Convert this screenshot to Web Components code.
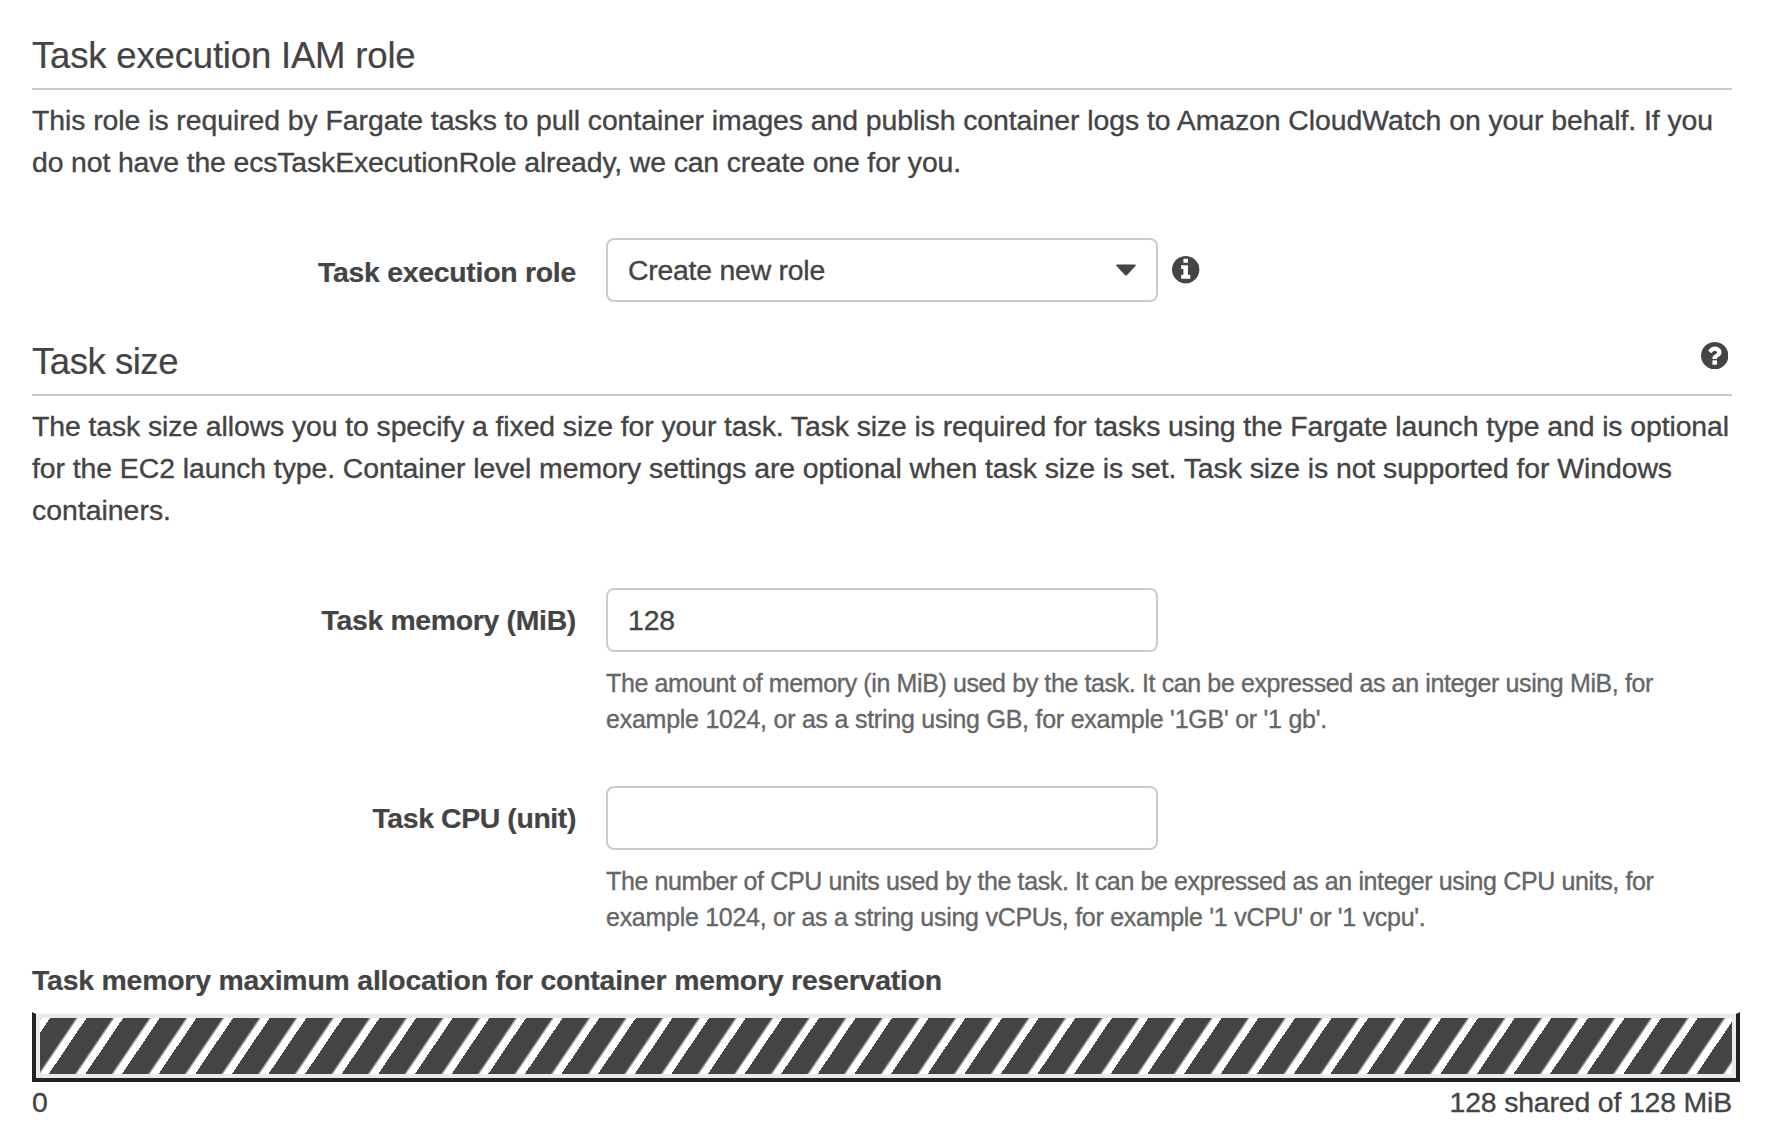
<!DOCTYPE html>
<html lang="en">
<head>
<meta charset="utf-8">
<title>Task definition</title>
<style>
html,body{margin:0;background:#fff}
body{font-family:"Liberation Sans",Arial,sans-serif;font-size:28.4px;line-height:42px;color:#444;-webkit-text-stroke:.35px currentColor}
</style>
</head>
<body>
<task-page></task-page>
<script>
const define = (name, html, init) => customElements.define(name, class extends HTMLElement {
  connectedCallback() {
    if (this.shadowRoot) return;
    const t = document.createElement('template');
    t.innerHTML = html;
    this.attachShadow({mode: 'open'}).appendChild(t.content.cloneNode(true));
    if (init) init.call(this, this.shadowRoot);
  }
});

// A single line of text, tracked so that it spans the given width.
define('text-line', `<style>:host{display:block;white-space:nowrap}span{display:inline-block}</style><span><slot></slot></span>`, function (root) {
  const s = root.querySelector('span');
  const n = this.textContent.length;
  const gap = (this.getAttribute('span') - s.getBoundingClientRect().width) / n;
  s.style.letterSpacing = gap.toFixed(4) + 'px';
});

define('ui-icon', `<style>:host{display:block;width:27.4px;height:27.4px;flex:none}svg{display:block;width:100%;height:100%;fill:#444}</style><svg viewBox="0 0 1536 1536"><path/></svg>`, function (root) {
  const disc = 'M1536 768q0 209-103 385.500t-279.500 279.500-385.500 103-385.500-103-279.500-279.500-103-385.500 103-385.500 279.500-279.500 385.500-103 385.500 103 279.500 279.500 103 385.500z';
  const glyph = {
    info: 'M1024 1248v-160q0-14-9-23t-23-9h-96v-512q0-14-9-23t-23-9h-320q-14 0-23 9t-9 23v160q0 14 9 23t23 9h96v320h-96q-14 0-23 9t-9 23v160q0 14 9 23t23 9h448q14 0 23-9t9-23zM896 352v-160q0-14-9-23t-23-9h-192q-14 0-23 9t-9 23v160q0 14 9 23t23 9h192q14 0 23-9t9-23z',
    help: 'M896 1248v-192q0-14-9-23t-23-9h-192q-14 0-23 9t-9 23v192q0 14 9 23t23 9h192q14 0 23-9t9-23zM1152 576q0-88-55.500-163t-138.500-116-170-41q-243 0-371 213-15 24 8 42l132 100q7 6 19 6 16 0 25-12 53-68 86-92 34-24 86-24 48 0 85.500 26t37.500 59q0 38-20 61t-68 45q-63 28-115.500 86.500t-52.500 125.500v36q0 14 9 23t23 9h192q14 0 23-9t9-23q0-19 21.500-49.500t54.500-49.500q32-18 49-28.500t46-35 44.500-48 28-60.500 12.500-81z'
  };
  const p = root.querySelector('path');
  p.setAttribute('fill-rule', 'evenodd');
  p.setAttribute('d', glyph[this.getAttribute('name')] + disc);
});

define('section-heading', `<style>
:host{display:flex;justify-content:space-between;align-items:flex-start;height:52px;border-bottom:2px solid #ccc;font-size:36.6px;line-height:40px;-webkit-text-stroke-width:.2px}
::slotted(ui-icon){margin-right:4px}
</style><slot></slot><slot name="action"></slot>`);

define('form-row', `<style>
:host{display:grid;grid-template-columns:544px 1fr;column-gap:30px}
.label{display:flex;justify-content:flex-end;font-weight:bold;-webkit-text-stroke-width:.2px;padding-top:var(--label-top,11px)}
.control{display:flex;align-items:center;gap:14.4px}
.help{grid-column:2;margin-top:13px;font-size:25px;line-height:36px;color:#666}
</style>
<div class="label"><slot name="label"></slot></div>
<div class="control"><slot></slot></div>
<slot name="help" class="h"></slot>`, function (root) {
  const slot = root.querySelector('.h');
  if (!this.querySelector('[slot=help]')) { slot.remove(); return; }
  const box = document.createElement('div');
  box.className = 'help';
  slot.replaceWith(box);
  box.appendChild(slot);
});

define('field-box', `<style>
:host{display:flex;align-items:center;justify-content:space-between;box-sizing:border-box;width:552px;height:64px;border:2px solid #ccc;border-radius:8px;padding:0 20px;background:#fff}
svg{display:none;width:20px;height:12px;fill:#444}
:host([select]) svg{display:block}
.v{padding-bottom:1px}
</style><div class="v"><slot></slot></div><svg viewBox="0 0 20 12"><path d="M1 .5H19Q20.300 .8 19.500 1.900L10.900 11.200Q10 12 9.100 11.200L.5 1.900Q-.3 .8 1 .5Z"/></svg>`);

define('allocation-bar', `<style>
:host{display:block;box-sizing:border-box;height:70px;border:4px solid #222;border-top:2px solid transparent;background:#e8ebec;background-clip:padding-box;padding:4px}
.fill{height:56px;background:repeating-linear-gradient(124.05deg,#444 8.25px,#444 29.3px,#fff 32px,#fff 38.590px)}
</style><div class="fill"></div>`);

define('task-page', `<style>
:host{display:flow-root;padding:36px 44px 0 32px;height:1100px}
.para{margin-top:9px}
form-row{margin-top:49px}
.role{margin-top:55px;--label-top:13px}
.second{margin-top:40px}
.mem{margin-top:57px}
.title{font-weight:bold;-webkit-text-stroke-width:.2px;margin-top:24px}
allocation-bar{margin:11px -8px 0 0}
.scale{display:flex;justify-content:space-between;margin-top:-1px}
</style>
<section-heading><text-line span="383.5">Task execution IAM role</text-line></section-heading>
<div class="para">
<text-line span="1681">This role is required by Fargate tasks to pull container images and publish container logs to Amazon CloudWatch on your behalf. If you</text-line>
<text-line span="929">do not have the ecsTaskExecutionRole already, we can create one for you.</text-line>
</div>
<form-row class="role"><text-line slot="label" span="258">Task execution role</text-line><field-box select><text-line span="197">Create new role</text-line></field-box><ui-icon name="info"></ui-icon></form-row>
<section-heading class="second"><text-line span="146">Task size</text-line><ui-icon slot="action" name="help"></ui-icon></section-heading>
<div class="para">
<text-line span="1697">The task size allows you to specify a fixed size for your task. Task size is required for tasks using the Fargate launch type and is optional</text-line>
<text-line span="1640">for the EC2 launch type. Container level memory settings are optional when task size is set. Task size is not supported for Windows</text-line>
<text-line span="139">containers.</text-line>
</div>
<form-row class="mem"><text-line slot="label" span="254.5">Task memory (MiB)</text-line><field-box><text-line span="47">128</text-line></field-box>
<text-line slot="help" span="1047">The amount of memory (in MiB) used by the task. It can be expressed as an integer using MiB, for</text-line>
<text-line slot="help" span="721">example 1024, or as a string using GB, for example '1GB' or '1 gb'.</text-line></form-row>
<form-row><text-line slot="label" span="203.5">Task CPU (unit)</text-line><field-box></field-box>
<text-line slot="help" span="1047.5">The number of CPU units used by the task. It can be expressed as an integer using CPU units, for</text-line>
<text-line slot="help" span="819.5">example 1024, or as a string using vCPUs, for example '1 vCPU' or '1 vcpu'.</text-line></form-row>
<div class="title"><text-line span="910">Task memory maximum allocation for container memory reservation</text-line></div>
<allocation-bar></allocation-bar>
<div class="scale"><text-line span="16">0</text-line><text-line span="282.5">128 shared of 128 MiB</text-line></div>
`);
</script>
</body>
</html>
